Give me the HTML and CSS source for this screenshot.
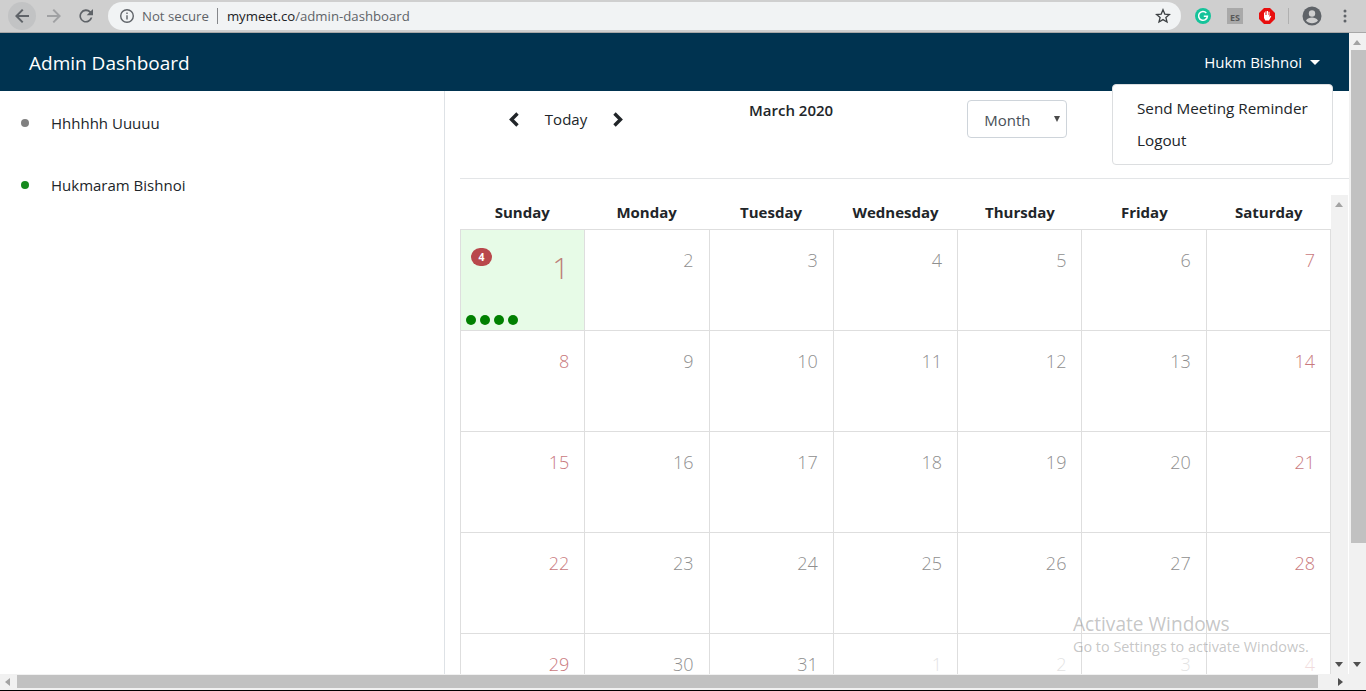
FILE: index.html
```html
<!DOCTYPE html>
<html>
<head>
  <title>Admin Dashboard</title>
  <link rel="stylesheet" href="styles.css">
</head>
<body>
  <div class="toolbar">
    <div class="tool-btn back-btn">
      <svg width="18" height="18" viewBox="0 0 18 18"><path d="M16 8H5.8l4.7-4.7L9 2 2 9l7 7 1.4-1.3L5.800 10H16z" fill="#5f6368"/></svg>
    </div>
    <div class="tool-btn">
      <svg width="18" height="18" viewBox="0 0 18 18"><path d="M2 8h10.200L7.500 3.300 9 2l7 7-7 7-1.400-1.300L12.200 10H2z" fill="#a0a1a3"/></svg>
    </div>
    <div class="tool-btn">
      <svg width="18" height="18" viewBox="0 0 18 18"><path d="M13.700 4.300A6.600 6.600 0 1 0 15.400 10.600h-1.800a4.900 4.900 0 1 1-1.200-5l-2.700 2.700H16V2z" fill="#5f6368"/></svg>
    </div>
    <div class="omnibox">
      <svg class="info-icon" width="16" height="16" viewBox="0 0 16 16"><circle cx="8" cy="8" r="6.300" fill="none" stroke="#5f6368" stroke-width="1.400"/><path d="M7.300 7.200h1.400v4.300H7.300zM7.300 4.500h1.400v1.400H7.300z" fill="#5f6368"/></svg>
      <span class="not-secure">Not secure</span>
      <span class="omni-sep"></span>
      <span class="url">mymeet.co<span class="url-path">/admin-dashboard</span></span>
      <svg class="star" width="16" height="16" viewBox="0 0 16 16"><path d="M8 1.800l1.800 4.300 4.600.4-3.500 3 1.100 4.500L8 11.600l-4 2.400 1.100-4.500-3.500-3 4.600-.4z" fill="none" stroke="#3c4043" stroke-width="1.300"/></svg>
    </div>
    <div class="extensions">
      <svg width="16" height="16" viewBox="0 0 16 16"><circle cx="8" cy="8" r="8" fill="#15c39a"/><path d="M11.300 4.900A4.400 4.400 0 1 0 12.400 8.300H8.800" fill="none" stroke="#fff" stroke-width="1.500"/></svg>
      <span class="ext-es">ES</span>
      <svg width="16" height="16" viewBox="0 0 16 16"><path d="M5 0h6l5 5v6l-5 5H5l-5-5V5z" fill="#e80e0e"/><path d="M5 8V4.500h1V7h.5V3.300h1V7H8V3h1v4h.5V3.800h1V9l1-1.300.8.500L10 12.500H6.300L5 10z" fill="#fff"/></svg>
      <span class="ext-sep"></span>
      <svg width="20" height="20" viewBox="0 0 20 20"><circle cx="10" cy="10" r="9.500" fill="#5f6368"/><circle cx="10" cy="7.500" r="3.200" fill="#cfcfcf"/><path d="M4 14.500c1.400-2.300 3.800-3 6-3s4.600.7 6 3c-1.400 1.800-3.600 2.800-6 2.800s-4.600-1-6-2.800z" fill="#cfcfcf"/></svg>
      <svg class="kebab" width="4" height="14" viewBox="0 0 4 14"><circle cx="2" cy="2" r="1.500" fill="#5f6368"/><circle cx="2" cy="7" r="1.500" fill="#5f6368"/><circle cx="2" cy="12" r="1.500" fill="#5f6368"/></svg>
    </div>
  </div>

  <div class="window">
    <div class="page">
      <nav class="navbar">
        <span class="brand">Admin Dashboard</span>
        <span class="user">Hukm Bishnoi<i class="caret"></i></span>
      </nav>
      <div class="dropdown-menu">
        <a>Send Meeting Reminder</a>
        <a>Logout</a>
      </div>
      <div class="content">
        <aside class="sidebar">
          <div class="person"><i class="status status-away"></i>Hhhhhh Uuuuu</div>
          <div class="person"><i class="status status-on"></i>Hukmaram Bishnoi</div>
        </aside>
        <main class="main">
          <div class="cal-head">
            <div class="cal-nav">
              <svg width="12" height="15" viewBox="0 0 12 15"><path d="M9.500 1.500L3.500 7.500l6 6" fill="none" stroke="#212529" stroke-width="3.400"/></svg>
              <span class="today">Today</span>
              <svg width="12" height="15" viewBox="0 0 12 15"><path d="M2.500 1.500l6 6-6 6" fill="none" stroke="#212529" stroke-width="3.400"/></svg>
            </div>
            <div class="cal-title">March 2020</div>
            <div class="month-select">Month<i class="select-arrow"></i></div>
          </div>
          <div class="cal-wrap">
            <div class="calendar">
              <div class="weekdays">
                <div>Sunday</div><div>Monday</div><div>Tuesday</div><div>Wednesday</div><div>Thursday</div><div>Friday</div><div>Saturday</div>
              </div>
              <div class="days">
                <div class="day day-active">
                  <span class="badge">4</span>
                  <span class="num num-big">1</span>
                  <span class="dots"><i></i><i></i><i></i><i></i></span>
                </div>
                <div class="day"><span class="num">2</span></div>
                <div class="day"><span class="num">3</span></div>
                <div class="day"><span class="num">4</span></div>
                <div class="day"><span class="num">5</span></div>
                <div class="day"><span class="num">6</span></div>
                <div class="day"><span class="num sat">7</span></div>

                <div class="day"><span class="num sat">8</span></div>
                <div class="day"><span class="num">9</span></div>
                <div class="day"><span class="num">10</span></div>
                <div class="day"><span class="num">11</span></div>
                <div class="day"><span class="num">12</span></div>
                <div class="day"><span class="num">13</span></div>
                <div class="day"><span class="num sat">14</span></div>

                <div class="day"><span class="num sat">15</span></div>
                <div class="day"><span class="num">16</span></div>
                <div class="day"><span class="num">17</span></div>
                <div class="day"><span class="num">18</span></div>
                <div class="day"><span class="num">19</span></div>
                <div class="day"><span class="num">20</span></div>
                <div class="day"><span class="num sat">21</span></div>

                <div class="day"><span class="num sat">22</span></div>
                <div class="day"><span class="num">23</span></div>
                <div class="day"><span class="num">24</span></div>
                <div class="day"><span class="num">25</span></div>
                <div class="day"><span class="num">26</span></div>
                <div class="day"><span class="num">27</span></div>
                <div class="day"><span class="num sat">28</span></div>

                <div class="day"><span class="num sat">29</span></div>
                <div class="day"><span class="num">30</span></div>
                <div class="day"><span class="num">31</span></div>
                <div class="day"><span class="num faded">1</span></div>
                <div class="day"><span class="num faded">2</span></div>
                <div class="day"><span class="num faded">3</span></div>
                <div class="day"><span class="num faded sat">4</span></div>
              </div>
            </div>
            <div class="scroll-v inner-scroll">
              <i class="arrow-up"></i>
              <i class="arrow-down"></i>
            </div>
          </div>
        </main>
      </div>
      <div class="watermark">
        <div class="wm-title">Activate Windows</div>
        <div class="wm-sub">Go to Settings to activate Windows.</div>
      </div>
    </div>
    <div class="scroll-v page-scroll">
      <i class="arrow-up"></i>
      <div class="thumb-v"></div>
      <i class="arrow-down"></i>
    </div>
  </div>

  <div class="scroll-h">
    <i class="arrow-left"></i>
    <div class="thumb-h"></div>
    <i class="arrow-right"></i>
  </div>
</body>
</html>
```

FILE: styles.css
```css
* {
  box-sizing: border-box;
}

html, body {
  height: 100%;
}

body {
  margin: 0;
  display: flex;
  flex-direction: column;
  overflow: hidden;
  font-family: "Open Sans", "Noto Sans", sans-serif;
  color: #212529;
  background: #fff;
}

/* browser chrome */
.toolbar {
  height: 33px;
  flex: none;
  display: flex;
  align-items: center;
  padding: 0 0 1px 8px;
  background: #cfcfcf;
  border-bottom: 1px solid #a8a8a8;
}

.tool-btn {
  width: 28px;
  height: 28px;
  margin-right: 4px;
  display: flex;
  align-items: center;
  justify-content: center;
  border-radius: 50%;
}

.back-btn {
  background: #c2c3c4;
}

.omnibox {
  width: 1073px;
  height: 28px;
  margin-left: 4px;
  padding: 0 10px 0 11px;
  display: flex;
  align-items: center;
  background: #f1f3f4;
  border-radius: 14px;
  font-size: 13.200px;
}

.info-icon {
  margin-right: 7px;
}

.not-secure {
  color: #5f6368;
}

.omni-sep {
  width: 1px;
  height: 16px;
  margin: 0 9px 0 8px;
  background: #85878a;
}

.url {
  color: #202124;
}

.url-path {
  color: #5f6368;
}

.star {
  margin-left: auto;
}

.extensions {
  margin-left: 14px;
  flex: 1;
  display: flex;
  align-items: center;
}

.ext-es {
  width: 16px;
  height: 16px;
  margin: 0 16px;
  padding-top: 4px;
  background: #a9a9a9;
  color: #5a5a5a;
  font-size: 9px;
  line-height: 12px;
  font-weight: 700;
  text-align: center;
}

.ext-sep {
  width: 1px;
  height: 16px;
  margin: 0 13px;
  background: #b0b0b0;
}

.kebab {
  margin-left: 21px;
}

/* page */
.window {
  flex: 1;
  min-height: 0;
  display: flex;
}

.page {
  position: relative;
  flex: 1;
  min-width: 0;
  display: flex;
  flex-direction: column;
  overflow: hidden;
}

.navbar {
  height: 58px;
  flex: none;
  padding: 0 29px;
  display: flex;
  align-items: center;
  justify-content: space-between;
  background: #003350;
  color: #fff;
}

.brand {
  margin-top: 2px;
  font-size: 19px;
}

.user {
  font-size: 15px;
  display: flex;
  align-items: center;
}

.caret {
  margin-left: 8px;
  border-top: 5px solid #fff;
  border-left: 5px solid transparent;
  border-right: 5px solid transparent;
}

.dropdown-menu {
  position: absolute;
  top: 51px;
  left: 1112px;
  width: 221px;
  height: 81px;
  padding: 7px 0;
  background: #fff;
  border: 1px solid #dcdee0;
  border-radius: 4px;
  z-index: 2;
}

.dropdown-menu a {
  display: block;
  height: 32px;
  padding-left: 24px;
  font-size: 15.250px;
  line-height: 32px;
}

.content {
  flex: 1;
  min-height: 0;
  display: flex;
}

.sidebar {
  width: 445px;
  flex: none;
  padding-top: 1px;
  border-right: 1px solid #dee2e6;
}

.person {
  height: 62px;
  padding-left: 21px;
  display: flex;
  align-items: center;
  font-size: 15px;
}

.status {
  width: 8px;
  height: 8px;
  margin-right: 22px;
  border-radius: 50%;
}

.status-away {
  background: #808080;
}

.status-on {
  background: #168a1e;
}

.main {
  flex: 1;
  min-width: 0;
  padding-left: 15px;
  display: flex;
  flex-direction: column;
}

.cal-head {
  height: 88px;
  flex: none;
  display: flex;
  align-items: flex-start;
  border-bottom: 1px solid #e3e5e7;
}

.cal-nav {
  margin: 18px 0 0 48px;
  width: 116px;
  display: flex;
  align-items: center;
  justify-content: space-between;
}

.today {
  font-size: 15px;
}

.cal-title {
  margin: 9px 0 0 125px;
  font-size: 15px;
  font-weight: 600;
}

.month-select {
  position: relative;
  width: 100px;
  height: 38px;
  margin: 9px 0 0 134px;
  padding-left: 16px;
  font-size: 15px;
  line-height: 38px;
  color: #495057;
  border: 1px solid #ced4da;
  border-radius: 4px;
}

.select-arrow {
  position: absolute;
  top: 15px;
  right: 6px;
  border-top: 6px solid #4a4a4a;
  border-left: 3px solid transparent;
  border-right: 3px solid transparent;
}

.cal-wrap {
  flex: 1;
  min-height: 0;
  padding-top: 16px;
  display: flex;
}

.calendar {
  width: 871px;
  flex: none;
}

.weekdays {
  height: 34px;
  display: grid;
  grid-template-columns: repeat(7, 1fr);
  align-items: center;
  text-align: center;
  font-size: 15px;
  font-weight: 700;
}

.days {
  display: grid;
  grid-template-columns: repeat(7, 1fr);
  grid-auto-rows: 101px;
  border-top: 1px solid #dedede;
  border-left: 1px solid #dedede;
}

.day {
  position: relative;
  padding: 17px 15px 0 0;
  text-align: right;
  border-right: 1px solid #dedede;
  border-bottom: 1px solid #dedede;
}

.day-active {
  background: #e7fbe7;
}

.num {
  display: block;
  font-size: 18px;
  font-weight: 300;
  line-height: 27px;
  color: #8f8f8f;
}

.num-big {
  font-size: 30px;
  line-height: 44px;
  color: #bd7f78;
  margin-top: -1px;
}

.sat {
  color: #c9797d;
}

.faded {
  opacity: 0.25;
}

.badge {
  position: absolute;
  top: 18px;
  left: 10px;
  width: 21px;
  height: 18px;
  background: #b9484c;
  color: #fff;
  border-radius: 9px;
  font-size: 10.500px;
  font-weight: 700;
  line-height: 18px;
  text-align: center;
}

.dots {
  position: absolute;
  left: 5px;
  bottom: 5px;
  display: flex;
  gap: 4px;
}

.dots i {
  width: 10px;
  height: 10px;
  background: #008000;
  border-radius: 50%;
}

/* scrollbars */
.scroll-v {
  width: 17px;
  flex: none;
  position: relative;
  background: #f1f1f1;
}

.page-scroll {
  padding-top: 17px;
}

.thumb-v {
  width: 15px;
  height: 493px;
  margin-left: 2px;
  background: #c1c1c1;
}

.arrow-up,
.arrow-down,
.arrow-left,
.arrow-right {
  position: absolute;
}

.arrow-up {
  top: 7px;
  left: 4px;
  border-bottom: 5px solid #a3a3a3;
  border-left: 4px solid transparent;
  border-right: 4px solid transparent;
}

.arrow-down {
  bottom: 7px;
  left: 4px;
  border-top: 5px solid #505050;
  border-left: 4px solid transparent;
  border-right: 4px solid transparent;
}

.scroll-h {
  position: relative;
  height: 17px;
  flex: none;
  padding: 1px 0 2px 17px;
  background: #f1f1f1;
  border-bottom: 1px solid #000;
}

.thumb-h {
  width: 1301px;
  height: 13px;
  background: #c1c1c1;
}

.arrow-left {
  top: 4px;
  left: 5px;
  border-right: 5px solid #a3a3a3;
  border-top: 4px solid transparent;
  border-bottom: 4px solid transparent;
}

.arrow-right {
  top: 4px;
  right: 23px;
  border-left: 5px solid #505050;
  border-top: 4px solid transparent;
  border-bottom: 4px solid transparent;
}

/* windows watermark */
.watermark {
  position: absolute;
  top: 579px;
  left: 1073px;
  color: rgba(110, 110, 110, 0.4);
  pointer-events: none;
  white-space: nowrap;
}

.wm-title {
  font-size: 19.100px;
  line-height: 25px;
}

.wm-sub {
  font-size: 14.400px;
  line-height: 20px;
}
```
